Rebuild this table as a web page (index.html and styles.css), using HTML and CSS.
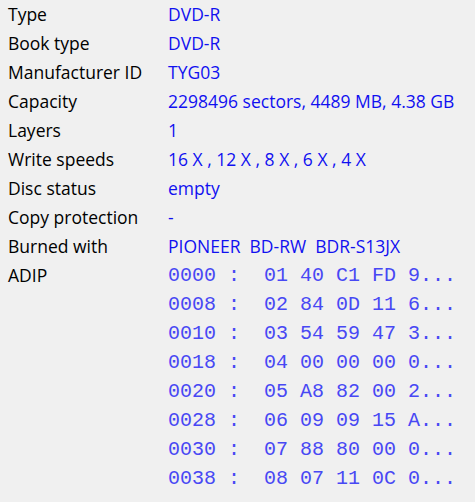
FILE: index.html
```html
<!DOCTYPE html>
<html lang="en">
<head>
    <meta charset="UTF-8">
    <title>Disc info</title>
    <link rel="stylesheet" href="styles.css">
</head>
<body>
    <div class="info">
        <div class="label">Type</div>
        <div class="value">DVD-R</div>

        <div class="label">Book type</div>
        <div class="value">DVD-R</div>

        <div class="label">Manufacturer ID</div>
        <div class="value">TYG03</div>

        <div class="label">Capacity</div>
        <div class="value">2298496 sectors, 4489 MB, 4.38 GB</div>

        <div class="label">Layers</div>
        <div class="value">1</div>

        <div class="label">Write speeds</div>
        <div class="value">16 X , 12 X , 8 X , 6 X , 4 X</div>

        <div class="label">Disc status</div>
        <div class="value">empty</div>

        <div class="label">Copy protection</div>
        <div class="value">-</div>

        <div class="label">Burned with</div>
        <div class="value pre">PIONEER  BD-RW  BDR-S13JX</div>

        <div class="label">ADIP</div>
        <div class="value hex">
            <div class="line">0000 :  01 40 C1 FD 9...</div>
            <div class="line">0008 :  02 84 0D 11 6...</div>
            <div class="line">0010 :  03 54 59 47 3...</div>
            <div class="line">0018 :  04 00 00 00 0...</div>
            <div class="line">0020 :  05 A8 82 00 2...</div>
            <div class="line">0028 :  06 09 09 15 A...</div>
            <div class="line">0030 :  07 88 80 00 0...</div>
            <div class="line">0038 :  08 07 11 0C 0...</div>
        </div>
    </div>
</body>
</html>
```
FILE: styles.css
```css
* {
    margin: 0;
    padding: 0;
    box-sizing: border-box;
}

body {
    background-color: #f0f0f0;
    font-family: "Open Sans", "Noto Sans", sans-serif;
    font-size: 17.5px;
    color: #000;
}

/* two columns: name / value */
.info {
    display: grid;
    grid-template-columns: 160px 1fr;
    padding: 0 8px;
    line-height: 29px;
}

.value {
    color: #1010f0;
}

.pre {
    white-space: pre;
}

/* hex dump: thin courier look */
.hex {
    font-family: "Liberation Mono", "Courier New", monospace;
    font-size: 20px;
    color: #4848f4;
}

.hex .line {
    white-space: pre;
}
```
